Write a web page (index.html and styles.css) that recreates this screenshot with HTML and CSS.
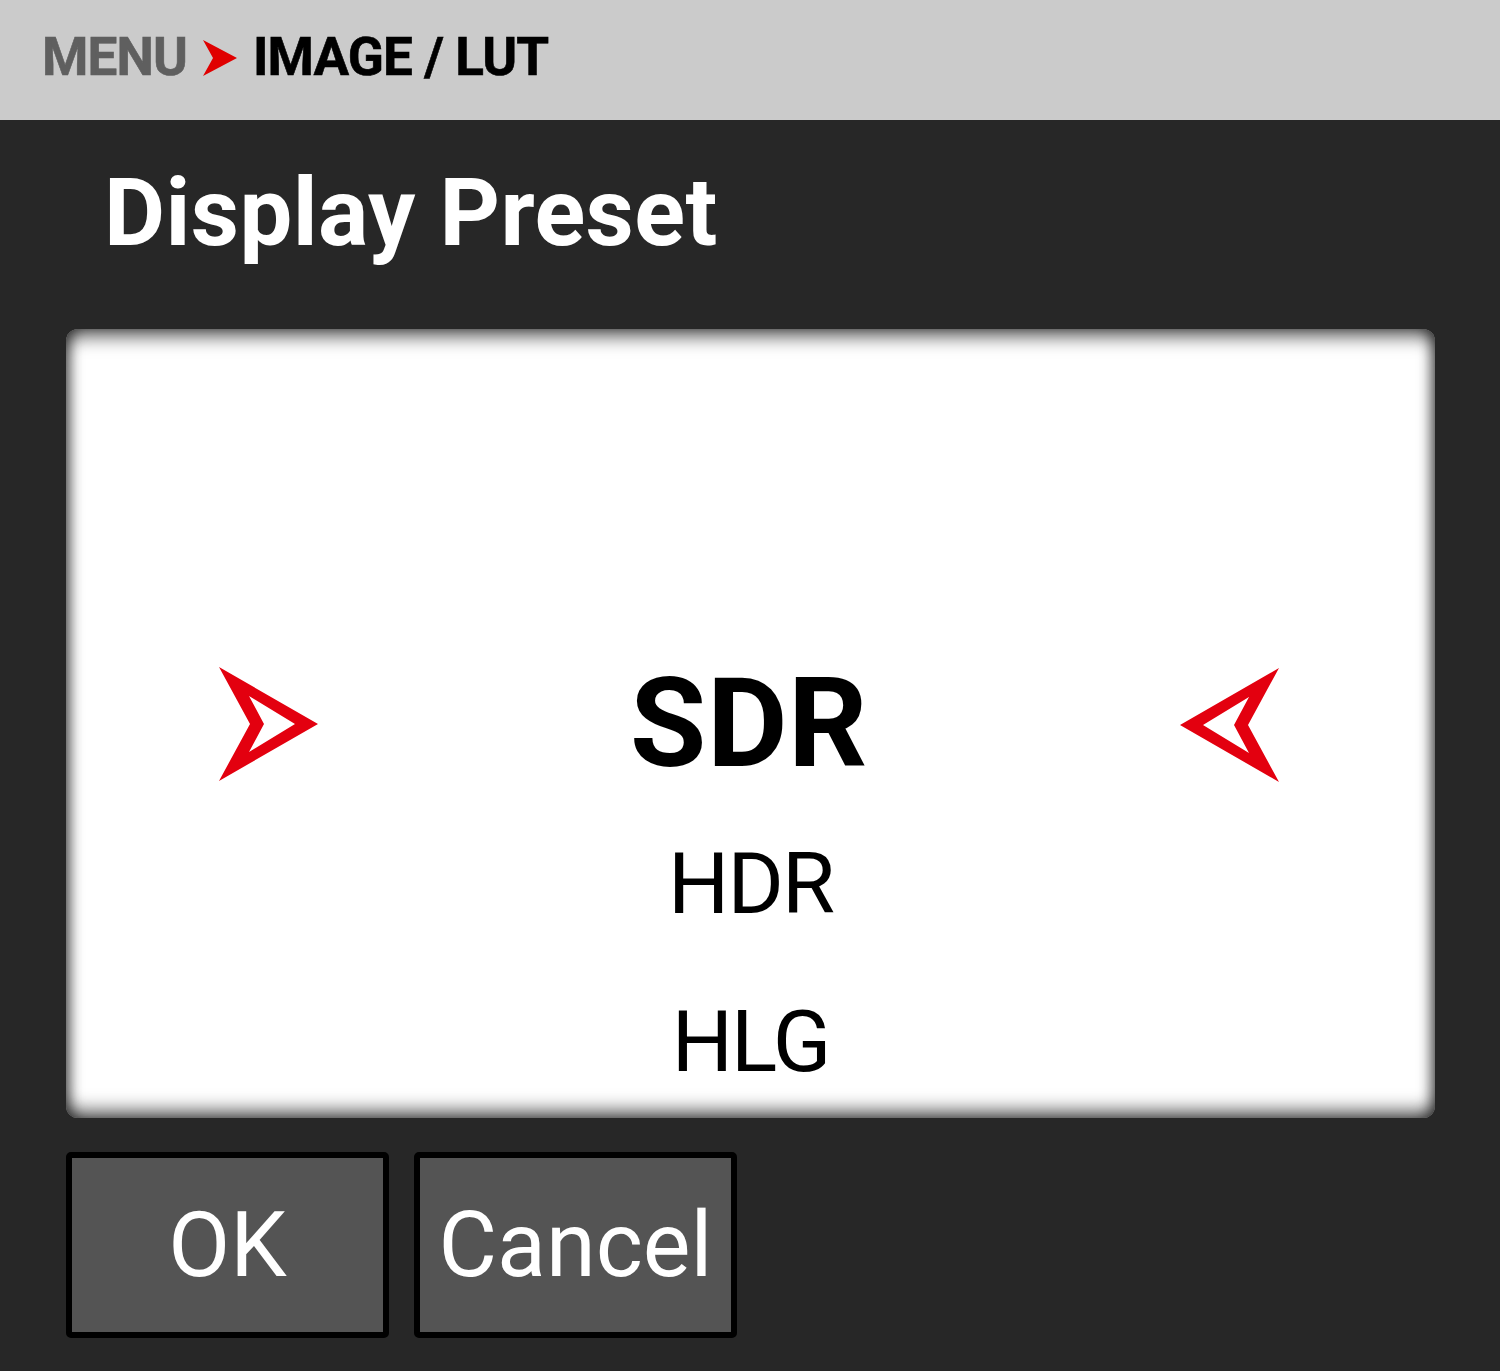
FILE: index.html
```html
<!DOCTYPE html>
<html lang="en">
<head>
  <meta charset="utf-8" />
  <title>Display Preset</title>
  <link rel="stylesheet" href="styles.css">
</head>
<body>
  <header class="crumbs">
    <span class="crumb-root">MENU</span>
    <svg class="crumb-sep" width="34" height="36" viewBox="0 0 34 36">
      <polygon points="0,0 34,18 0,36 10,18" fill="#e00000" />
    </svg>
    <span class="crumb-current">IMAGE / LUT</span>
  </header>

  <h1 class="title">Display Preset</h1>

  <div class="picker">
    <div class="row selected">
      <svg class="pointer" width="100" height="115" viewBox="0 0 100 115">
        <path fill-rule="evenodd" fill="#e3000f"
          d="M1,0 L100,57 L1,114 L32,57 Z M31,29 L46,57 L31,85 L77,57 Z" />
      </svg>
      <span class="value">SDR</span>
      <svg class="pointer flip" width="100" height="115" viewBox="0 0 100 115">
        <path fill-rule="evenodd" fill="#e3000f"
          d="M1,0 L100,57 L1,114 L32,57 Z M31,29 L46,57 L31,85 L77,57 Z" />
      </svg>
    </div>
    <ul class="options">
      <li>HDR</li>
      <li>HLG</li>
    </ul>
  </div>

  <div class="actions">
    <button class="btn">OK</button>
    <button class="btn">Cancel</button>
  </div>
</body>
</html>
```

FILE: styles.css
```css
body {
  margin: 0;
  background: #272727;
  font-family: Roboto, "Liberation Sans", sans-serif;
  color: #fff;
  width: 1500px;
  height: 1371px;
  overflow: hidden;
}

/* breadcrumb bar */
.crumbs {
  height: 120px;
  box-sizing: border-box;
  background: #cbcbcb;
  display: flex;
  align-items: center;
  padding: 0 0 6px 42px;
  font-size: 53px;
  font-weight: 700;
  letter-spacing: -0.9px;
  -webkit-text-stroke: 0.6px currentColor;
}
.crumb-root {
  color: #5f5f5f;
}
.crumb-sep {
  margin: 2px 16px 0 16px;
}
.crumb-current {
  color: #000;
}

.title {
  margin: 38px 0 61px 104px;
  font-size: 94px;
  line-height: 110px;
  font-weight: 700;
  letter-spacing: 0.4px;
}

/* value picker */
.picker {
  margin: 0 0 0 66px;
  width: 1369px;
  height: 789px;
  box-sizing: border-box;
  background: #fff;
  border-radius: 12px;
  box-shadow: inset 0 14px 18px -6px rgba(0, 0, 0, 0.6),
    inset 0 -14px 18px -6px rgba(0, 0, 0, 0.6),
    inset 10px 0 14px -6px rgba(0, 0, 0, 0.5),
    inset -10px 0 14px -6px rgba(0, 0, 0, 0.5);
  padding-top: 320px;
  overflow: hidden;
  color: #000;
}
.row {
  display: flex;
  align-items: center;
  padding: 0 155px 0 152px;
  height: 150px;
}
.value {
  flex: 1;
  text-align: center;
  font-size: 124px;
  line-height: 150px;
  font-weight: 700;
  letter-spacing: 0.5px;
}
.pointer.flip {
  transform: scaleX(-1);
  margin-top: 3px;
}
.options {
  list-style: none;
  margin: 6px 0 0;
  padding: 0;
}
.options li {
  text-align: center;
  font-size: 86px;
  line-height: 158px;
  letter-spacing: -2px;
}

/* buttons */
.actions {
  display: flex;
  gap: 25px;
  margin: 34px 0 0 66px;
}
.btn {
  width: 323px;
  height: 186px;
  box-sizing: border-box;
  border: 6px solid #000;
  border-radius: 5px;
  background: #545454;
  color: #fff;
  font-family: Roboto, "Liberation Sans", sans-serif;
  font-size: 90px;
  padding: 0;
}
```
